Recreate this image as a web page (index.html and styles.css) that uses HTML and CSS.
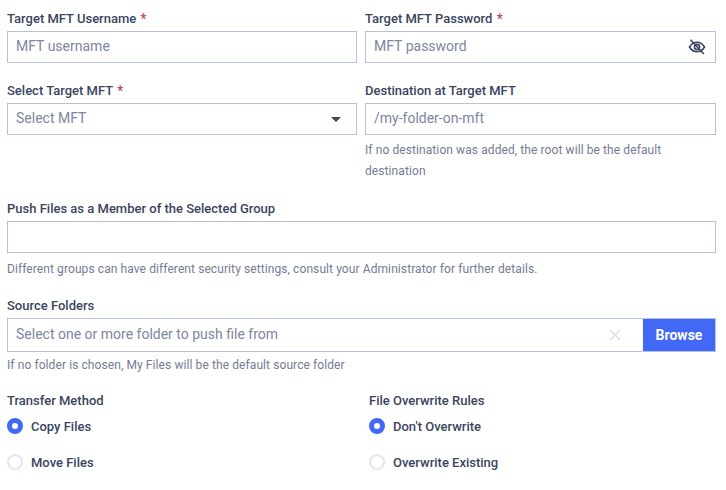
FILE: index.html
```html
<!DOCTYPE html>
<html lang="en">
  <head>
    <meta charset="UTF-8" />
    <meta name="viewport" content="width=device-width, initial-scale=1.0" />
    <title>Push Files</title>
    <link rel="stylesheet" href="styles.css">
  </head>
  <body>
    <form class="form">
      <div class="row">
        <div class="field">
          <label class="label">Target MFT Username <span class="req">*</span></label>
          <div class="box"><span class="placeholder">MFT username</span></div>
        </div>
        <div class="field">
          <label class="label">Target MFT Password <span class="req">*</span></label>
          <div class="box">
            <span class="placeholder">MFT password</span>
            <svg class="eye" width="18" height="18" viewBox="0 0 18 18" fill="none" stroke="#3a4560" stroke-width="1.6">
              <path d="M1.5 9C3.4 5.8 6 4.2 9 4.2S14.6 5.8 16.5 9C14.6 12.2 12 13.8 9 13.8S3.4 12.2 1.5 9Z" />
              <circle cx="9" cy="9" r="2.6" />
              <path d="M2.5 1.8L15.8 16" />
            </svg>
          </div>
        </div>
      </div>

      <div class="row row-two">
        <div class="field">
          <label class="label">Select Target MFT <span class="req">*</span></label>
          <div class="box">
            <span class="placeholder">Select MFT</span>
            <span class="caret"></span>
          </div>
        </div>
        <div class="field">
          <label class="label">Destination at Target MFT</label>
          <div class="box"><span class="placeholder">/my-folder-on-mft</span></div>
          <p class="help help-tall">If no destination was added, the root will be the default destination</p>
        </div>
      </div>

      <div class="field group">
        <label class="label">Push Files as a Member of the Selected Group</label>
        <div class="box"></div>
        <p class="help">Different groups can have different security settings, consult your Administrator for further details.</p>
      </div>

      <div class="field source">
        <label class="label">Source Folders</label>
        <div class="box box-browse">
          <span class="placeholder">Select one or more folder to push file from</span>
          <svg class="clear" width="12" height="12" viewBox="0 0 12 12" stroke="#d9dce6" stroke-width="1.4">
            <path d="M1 1L11 11M11 1L1 11" />
          </svg>
          <button class="browse" type="button">Browse</button>
        </div>
        <p class="help">If no folder is chosen, My Files will be the default source folder</p>
      </div>

      <div class="options">
        <div class="option-col">
          <div class="label">Transfer Method</div>
          <div class="radio"><span class="dot on"></span>Copy Files</div>
          <div class="radio"><span class="dot"></span>Move Files</div>
        </div>
        <div class="option-col">
          <div class="label">File Overwrite Rules</div>
          <div class="radio"><span class="dot on"></span>Don't Overwrite</div>
          <div class="radio"><span class="dot"></span>Overwrite Existing</div>
        </div>
      </div>
    </form>
  </body>
</html>
```

FILE: styles.css
```css
body {
  font-family: "Roboto", sans-serif;
  margin: 0;
  padding: 0;
  background-color: #fff;
  color: #3a4560;
  overflow: hidden;
}

.form {
  padding: 11px 10px 0 7px;
}

.row {
  display: grid;
  grid-template-columns: 350px 351px;
  column-gap: 8px;
}

.row-two {
  margin-top: 20px;
}

.label {
  display: block;
  font-size: 13px;
  font-weight: 500;
  line-height: 15px;
  margin-bottom: 5px;
  color: #3a4560;
}

.req {
  color: #d0314a;
  font-size: 14px;
  font-weight: 400;
  line-height: 0;
  margin-left: 1px;
  vertical-align: -1px;
}

.box {
  display: flex;
  align-items: center;
  height: 32px;
  box-sizing: border-box;
  padding: 0 8px;
  border: 1px solid #b4c0dc;
  background-color: #fff;
}

.placeholder {
  flex: 1;
  font-size: 14px;
  line-height: 16px;
  margin-top: -2px;
  color: #7c86a0;
}

.eye {
  margin-right: 1px;
}

.caret {
  width: 0;
  height: 0;
  margin-right: 7px;
  border-left: 5px solid transparent;
  border-right: 5px solid transparent;
  border-top: 5px solid #3a4560;
}

.help {
  margin: 0;
  font-size: 12px;
  line-height: 21px;
  letter-spacing: 0.09px;
  color: #737c94;
}

.help-tall {
  margin-top: 5px;
}

.group {
  margin-top: 19px;
}

.group .help {
  margin-top: 6px;
}

.source {
  margin-top: 18px;
}

.source .help {
  margin-top: 3px;
}

.box-browse {
  height: 34px;
  padding: 0 0 0 8px;
}

.clear {
  margin-right: 22px;
}

.browse {
  align-self: stretch;
  width: 72px;
  border: 0;
  padding: 0;
  background-color: #4169f5;
  color: #fff;
  font-family: inherit;
  font-size: 14px;
  font-weight: 700;
}

.options {
  display: grid;
  grid-template-columns: 362px 1fr;
  margin-top: 17px;
}

.options .label {
  margin-bottom: 9px;
}

.radio {
  display: flex;
  align-items: center;
  height: 18px;
  margin-bottom: 18px;
  font-size: 13px;
  font-weight: 500;
  color: #3a4560;
}

.dot {
  width: 16px;
  height: 16px;
  margin-right: 8px;
  box-sizing: border-box;
  border: 2px solid #e4e6ec;
  border-radius: 50%;
}

.dot.on {
  border: 5.5px solid #4169f5;
  background-color: #fff;
}
```
